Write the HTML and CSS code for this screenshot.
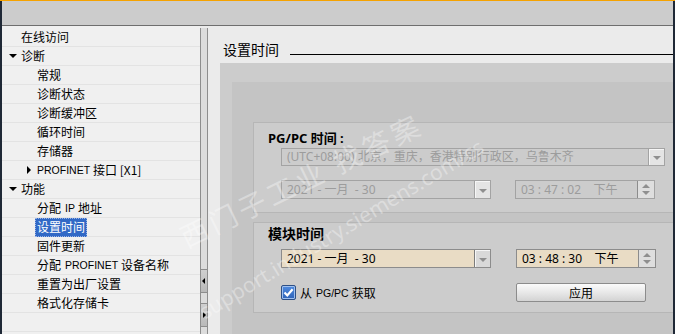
FILE: index.html
```html
<!DOCTYPE html>
<html lang="zh">

<head>
    <meta charset="UTF-8">
    <meta name="viewport" content="width=device-width, initial-scale=1.0">
    <title>设置时间</title>
    <link rel="stylesheet" href="styles.css">
</head>

<body>
    <div class="window">
        <div class="topbar"></div>
        <div class="main">
            <ul class="tree">
                <li class="row lv1"><span class="arrow"></span>在线访问</li>
                <li class="row lv1"><span class="arrow down"></span>诊断</li>
                <li class="row lv2">常规</li>
                <li class="row lv2">诊断状态</li>
                <li class="row lv2">诊断缓冲区</li>
                <li class="row lv2">循环时间</li>
                <li class="row lv2">存储器</li>
                <li class="row lv2b"><span class="arrow right"></span><span class="lat">PROFINET</span>接口 [X1]</li>
                <li class="row lv1"><span class="arrow down"></span>功能</li>
                <li class="row lv2">分配<span class="lat sp">IP</span>地址</li>
                <li class="row lv2sel"><span class="selected">设置时间</span></li>
                <li class="row lv2">固件更新</li>
                <li class="row lv2">分配<span class="lat sp">PROFINET</span>设备名称</li>
                <li class="row lv2">重置为出厂设置</li>
                <li class="row lv2">格式化存储卡</li>
                <li class="row lv2"></li>
            </ul>
            <div class="splitter">
                <div class="track">
                    <div class="split-btn"><span class="tri-left"></span></div>
                    <div class="split-btn"><span class="tri-right"></span></div>
                </div>
            </div>
            <section class="content">
                <div class="title"><span>设置时间</span>
                    <div class="rule"></div>
                </div>
                <div class="outer">
                    <div class="inner">
                        <div class="group g1">
                            <div class="group-title">PG/PC 时间 :</div>
                            <div class="field combo disabled">
                                <span class="val">(UTC+08:00) 北京，重庆，香港特别行政区，乌鲁木齐</span>
                                <span class="drop"><i></i></span>
                            </div>
                            <div class="field-row">
                                <div class="field date disabled">
                                    <span class="val">2021 - 一月  - 30</span>
                                    <span class="drop"><i></i></span>
                                </div>
                                <div class="field time disabled">
                                    <span class="val">03 : 47 : 02    下午</span>
                                    <span class="spin"><i class="up"></i><i class="dn"></i></span>
                                </div>
                            </div>
                        </div>
                        <div class="group g2">
                            <div class="group-title">模块时间</div>
                            <div class="field-row">
                                <div class="field date active">
                                    <span class="val">2021 - 一月  - 30</span>
                                    <span class="drop"><i></i></span>
                                </div>
                                <div class="field time active">
                                    <span class="val">03 : 48 : 30    下午</span>
                                    <span class="spin"><i class="up"></i><i class="dn"></i></span>
                                </div>
                            </div>
                            <div class="action-row">
                                <label class="check">
                                    <span class="box">
                                        <svg width="11" height="11" viewBox="0 0 11 11">
                                            <path d="M1.5 5.5 L4.3 8.4 L9.6 2.2" fill="none" stroke="#fff" stroke-width="2.2" />
                                        </svg>
                                    </span>
                                    从<span class="lat sp">PG/PC</span>获取
                                </label>
                                <button class="apply">应用</button>
                            </div>
                        </div>
                    </div>
                </div>
            </section>
        </div>
        <!-- watermark of the screenshot -->
        <div class="wm wm-cn">西门子工业 找答案</div>
        <div class="wm wm-url">support.industry.siemens.com/cs</div>
    </div>
</body>

</html>
```

FILE: styles.css
```css
* {
    box-sizing: border-box;
}

body {
    margin: 0;
    background: #1f2836;
    font-family: "Noto Sans", "Noto Sans CJK SC", sans-serif;
    font-size: 12px;
    color: #000;
}

.window {
    position: relative;
    width: 675px;
    height: 334px;
    overflow: hidden;
    border-top: 1px solid #f5a200;
    padding: 0 2px;
    background: #1f2836;
    display: flex;
    flex-direction: column;
}

.topbar {
    height: 25px;
    background: #cccccc;
    border-bottom: 1px solid #6e6e6e;
    flex: none;
}

.main {
    flex: 1;
    display: flex;
    min-height: 0;
}

/* left tree */
.tree {
    list-style: none;
    margin: 0;
    padding: 2px 0 0 0;
    width: 198px;
    background: #f0f0f0;
    flex: none;
}

.row {
    height: 19px;
    border-bottom: 1px solid #e3e3e3;
    display: flex;
    align-items: center;
    white-space: nowrap;
    line-height: 18px;
    font-family: "Noto Sans CJK SC", sans-serif;
}

.row.lv1 {
    padding-left: 5px;
}

.row.lv2 {
    padding-left: 35px;
}

.row.lv2b {
    padding-left: 23px;
}

.row.lv2sel {
    padding-left: 33px;
}

.arrow {
    width: 14px;
    height: 8px;
    position: relative;
    flex: none;
}

.arrow.down::before {
    content: '';
    position: absolute;
    left: 2px;
    top: 2px;
    border-left: 4px solid transparent;
    border-right: 4px solid transparent;
    border-top: 4px solid #000;
}

.row.lv2b .arrow {
    width: 12px;
}

.arrow.right::before {
    content: '';
    position: absolute;
    left: 2px;
    top: 0;
    border-top: 4px solid transparent;
    border-bottom: 4px solid transparent;
    border-left: 4px solid #000;
}

.lat {
    font-family: "Liberation Sans", sans-serif;
    font-size: 10.5px;
    margin-right: 3px;
}

.lat.sp {
    margin-left: 4px;
}

.selected {
    background: #3169c6;
    color: #fff;
    height: 19px;
    padding: 0 2px;
    outline: 1px dotted #9db5e6;
    outline-offset: -1px;
    line-height: 18px;
}

/* splitter between tree and editor */
.splitter {
    width: 8px;
    flex: none;
    padding-top: 2px;
    background: #ebebeb;
    display: flex;
}

.track {
    flex: 1;
    width: 7px;
    border-left: 1px solid #8d8d8d;
    border-right: 1px solid #8d8d8d;
    background: #dcdcdc;
    box-shadow: 1px 0 0 #fff;
    padding-top: 241px;
    display: flex;
    flex-direction: column;
    gap: 10px;
}

.split-btn {
    height: 24px;
    background: linear-gradient(#cfcfcf, #b9b9b9);
    border-top: 1px solid #8d8d8d;
    border-bottom: 1px solid #8d8d8d;
    position: relative;
}

.tri-left,
.tri-right {
    position: absolute;
    top: 8px;
    border-top: 3px solid transparent;
    border-bottom: 3px solid transparent;
}

.tri-left {
    left: 1px;
    border-right: 3px solid #000;
}

.tri-right {
    left: 2px;
    border-left: 3px solid #000;
}

/* editor */
.content {
    flex: 1;
    background: #ebebeb;
    display: flex;
    flex-direction: column;
    min-width: 0;
}

.title {
    height: 37px;
    padding: 14px 0 0 15px;
    display: flex;
    align-items: flex-start;
    flex: none;
}

.title span {
    font-family: "Noto Sans CJK SC", sans-serif;
    font-size: 14px;
    line-height: 18px;
}

.title .rule {
    flex: 1;
    height: 1px;
    background: #000;
    margin: 14px 0 0 11px;
}

.outer {
    flex: 1;
    margin-left: 12px;
    background: #cccccc;
    padding: 19px 0 0 12px;
    display: flex;
}

.inner {
    flex: 1;
    background: #c4c4c4;
    padding: 40px 0 0 21px;
}

.group {
    height: 91px;
    border: 1px solid #b6b6b6;
    border-right: none;
    background: #cccccc;
    padding-left: 14px;
}

.g1 {
    padding-top: 7px;
}

.g2 {
    margin-top: 9px;
    padding-top: 2px;
}

.group-title {
    font-weight: bold;
    font-size: 14px;
    line-height: 17px;
    font-family: "Noto Sans", "Noto Sans CJK SC", sans-serif;
}

.g1 .group-title {
    font-size: 13px;
}

.field {
    height: 19px;
    border: 1px solid #a3a3a3;
    display: flex;
    align-items: stretch;
    white-space: pre;
}

.field .val {
    flex: 1;
    padding-left: 5px;
    line-height: 17px;
    overflow: hidden;
}

.field.disabled {
    background: #cccccc;
    color: #9c9c9c;
}

.field.active {
    background: #e9dcc5;
    border-color: #8c8c8c;
}

.combo {
    margin: 1px 0 0 13px;
    width: 384px;
    height: 18px;
}

.combo .val {
    line-height: 16px;
}

.field-row {
    display: flex;
    margin-left: 13px;
}

.g1 .field-row {
    margin-top: 14px;
}

.g2 .field-row {
    margin-top: 7px;
}

.date {
    width: 210px;
}

.time {
    width: 140px;
    margin-left: 24px;
}

.drop {
    width: 16px;
    flex: none;
    border-left: 1px solid #a3a3a3;
    background: #e4e4e4;
    box-shadow: inset 1px 1px 0 #f6f6f6;
    display: flex;
    align-items: center;
    justify-content: center;
}

.active .drop {
    background: #d9d9d9;
    border-left-color: #7c7c7c;
}

.drop i {
    border-left: 4px solid transparent;
    border-right: 4px solid transparent;
    border-top: 4px solid #8f8f8f;
    margin-top: 2px;
}

.spin {
    width: 17px;
    flex: none;
    border-left: 1px solid #8c8c8c;
    background: #dedede;
    display: flex;
    flex-direction: column;
    align-items: center;
    justify-content: center;
    gap: 3px;
}

.spin .up {
    border-left: 4px solid transparent;
    border-right: 4px solid transparent;
    border-bottom: 4px solid #8f8f8f;
}

.spin .dn {
    border-left: 4px solid transparent;
    border-right: 4px solid transparent;
    border-top: 4px solid #8f8f8f;
}

.g2 .time {
    margin-left: 25px;
}

.action-row {
    display: flex;
    align-items: center;
    margin: 15px 0 0 13px;
    height: 19px;
}

.check {
    display: flex;
    align-items: center;
    width: 235px;
    font-family: "Noto Sans CJK SC", sans-serif;
    white-space: nowrap;
}

.check .box {
    width: 15px;
    height: 15px;
    border: 1px solid #2c4f86;
    background: linear-gradient(#4f8be0, #2e63b8);
    border-radius: 2px;
    display: flex;
    align-items: center;
    justify-content: center;
    margin-right: 4px;
    box-shadow: inset 0 0 0 1px #9fc0ef;
}

.apply {
    width: 130px;
    height: 19px;
    border: 1px solid #8c8c8c;
    border-radius: 2px;
    background: linear-gradient(#fbfbfb, #e8e8e8 50%, #d3d3d3);
    font-family: "Noto Sans CJK SC", sans-serif;
    font-size: 12px;
    padding: 0;
    line-height: 16px;
    color: #000;
}

/* watermark */
.wm {
    position: absolute;
    color: rgba(255, 255, 255, 0.35);
    white-space: nowrap;
    transform-origin: 0 100%;
    pointer-events: none;
}

.wm-cn {
    left: 190px;
    top: 215px;
    font-size: 28px;
    letter-spacing: 4px;
    font-family: "Noto Sans CJK SC", sans-serif;
    transform: rotate(-26deg);
}

.wm-url {
    left: 208px;
    top: 296px;
    font-size: 21px;
    font-family: "Noto Sans", sans-serif;
    transform: rotate(-31deg);
}
```
